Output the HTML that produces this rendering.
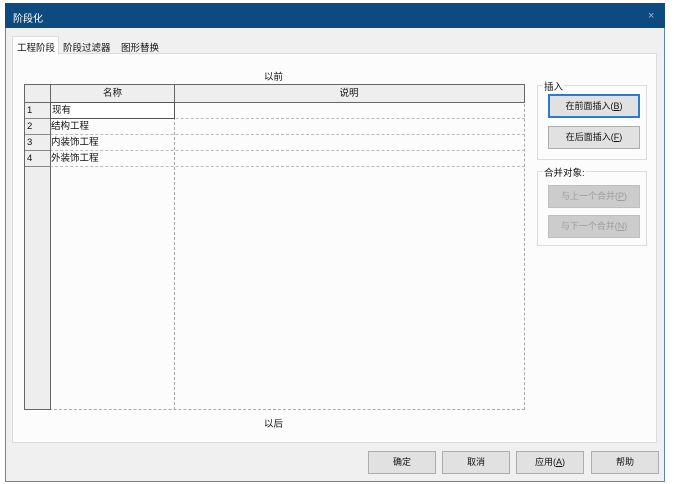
<!DOCTYPE html><html><head><meta charset="utf-8"><style>
*{box-sizing:border-box;margin:0;padding:0}
body{width:674px;height:484px;background:#fff;font-family:"Liberation Sans","Noto Sans CJK SC",sans-serif;font-size:9.5px;color:#111;position:relative;overflow:hidden}
.a{position:absolute}
.win{left:5px;top:3px;width:660px;height:479px;background:#f0f0f0;border:1px solid #5b87b8;border-top:none}
.title{left:5px;top:3px;width:660px;height:25px;background:#0c4a80;color:#fff;font-size:10px;padding:7px 0 0 8px}
.panel{left:12px;top:53px;width:645px;height:390px;background:#fdfcfd;border:1px solid #dcdcdc}
.btn{background:#e1e1e1;border:1px solid #adadad;text-align:center;font-size:9px;line-height:21px}
.dis{color:#9c9c9c;background:#ccc;border-color:#bfbfbf}
.grp{border:1px solid #dcdcdc}
.row{height:16px;border-bottom:1px dashed #bbb;line-height:15px}
.n{padding-left:2px;display:inline-block;width:26px;height:16px;border-bottom:1px solid #888;border-right:1px solid #666;vertical-align:top}
</style></head><body>
<div class="a win"></div>
<div class="a title">阶段化<span class="a" style="left:643px;top:7px;color:#9cb7d6;font-size:11px">×</span></div>
<div class="a panel"></div>
<div class="a" style="left:12px;top:36px;width:47px;height:18px;background:#fdfcfd;border:1px solid #dcdcdc;border-bottom:none;padding:3px 0 0 4px">工程阶段</div>
<div class="a" style="left:63px;top:40px">阶段过滤器</div>
<div class="a" style="left:121px;top:40px">图形替换</div>
<div class="a" style="left:264px;top:69px">以前</div>
<div class="a" style="left:264px;top:416px">以后</div>
<div class="a" style="left:24px;top:84px;width:501px;height:326px;border:1px dashed #aaa;border-left:none;border-top:none"></div>
<div class="a" style="left:24px;top:84px;width:27px;height:326px;background:#efeeef;border:1px solid #666"></div>
<div class="a" style="left:174px;top:102px;height:308px;border-left:1px dashed #aaa"></div>
<div class="a" style="left:24px;top:84px;width:501px;height:19px;background:#efeeef;border:1px solid #666"></div>
<div class="a" style="left:50px;top:84px;width:125px;height:19px;border:1px solid #666;text-align:center;line-height:17px">名称</div>
<div class="a" style="left:174px;top:84px;width:351px;height:19px;border:1px solid #666;border-left:none;text-align:center;line-height:17px">说明</div>
<div class="a" style="left:25px;top:103px;width:500px">
<div class="row"><span class="n">1</span></div>
<div class="row"><span class="n">2</span>结构工程</div>
<div class="row"><span class="n">3</span>内装饰工程</div>
<div class="row"><span class="n">4</span>外装饰工程</div>
</div>
<div class="a" style="left:50px;top:102px;width:125px;height:17px;border:1px solid #555;background:#fff;padding-left:1px;line-height:15px">现有</div>
<div class="a grp" style="left:537px;top:85px;width:110px;height:75px"></div>
<div class="a" style="left:543px;top:79px;background:#fdfcfd;padding:0 1px">插入</div>
<div class="a btn" style="left:548px;top:94px;width:92px;height:24px;border:2px solid #2b7ad0;line-height:20px">在前面插入(<u>B</u>)</div>
<div class="a btn" style="left:548px;top:126px;width:92px;height:23px">在后面插入(<u>F</u>)</div>
<div class="a grp" style="left:537px;top:171px;width:110px;height:75px"></div>
<div class="a" style="left:543px;top:165px;background:#fdfcfd;padding:0 1px">合并对象:</div>
<div class="a btn dis" style="left:548px;top:185px;width:92px;height:23px">与上一个合并(<u>P</u>)</div>
<div class="a btn dis" style="left:548px;top:215px;width:92px;height:23px">与下一个合并(<u>N</u>)</div>
<div class="a btn" style="left:368px;top:451px;width:68px;height:23px">确定</div>
<div class="a btn" style="left:442px;top:451px;width:68px;height:23px">取消</div>
<div class="a btn" style="left:516px;top:451px;width:68px;height:23px">应用(<u>A</u>)</div>
<div class="a btn" style="left:591px;top:451px;width:68px;height:23px">帮助</div>
</body></html>
